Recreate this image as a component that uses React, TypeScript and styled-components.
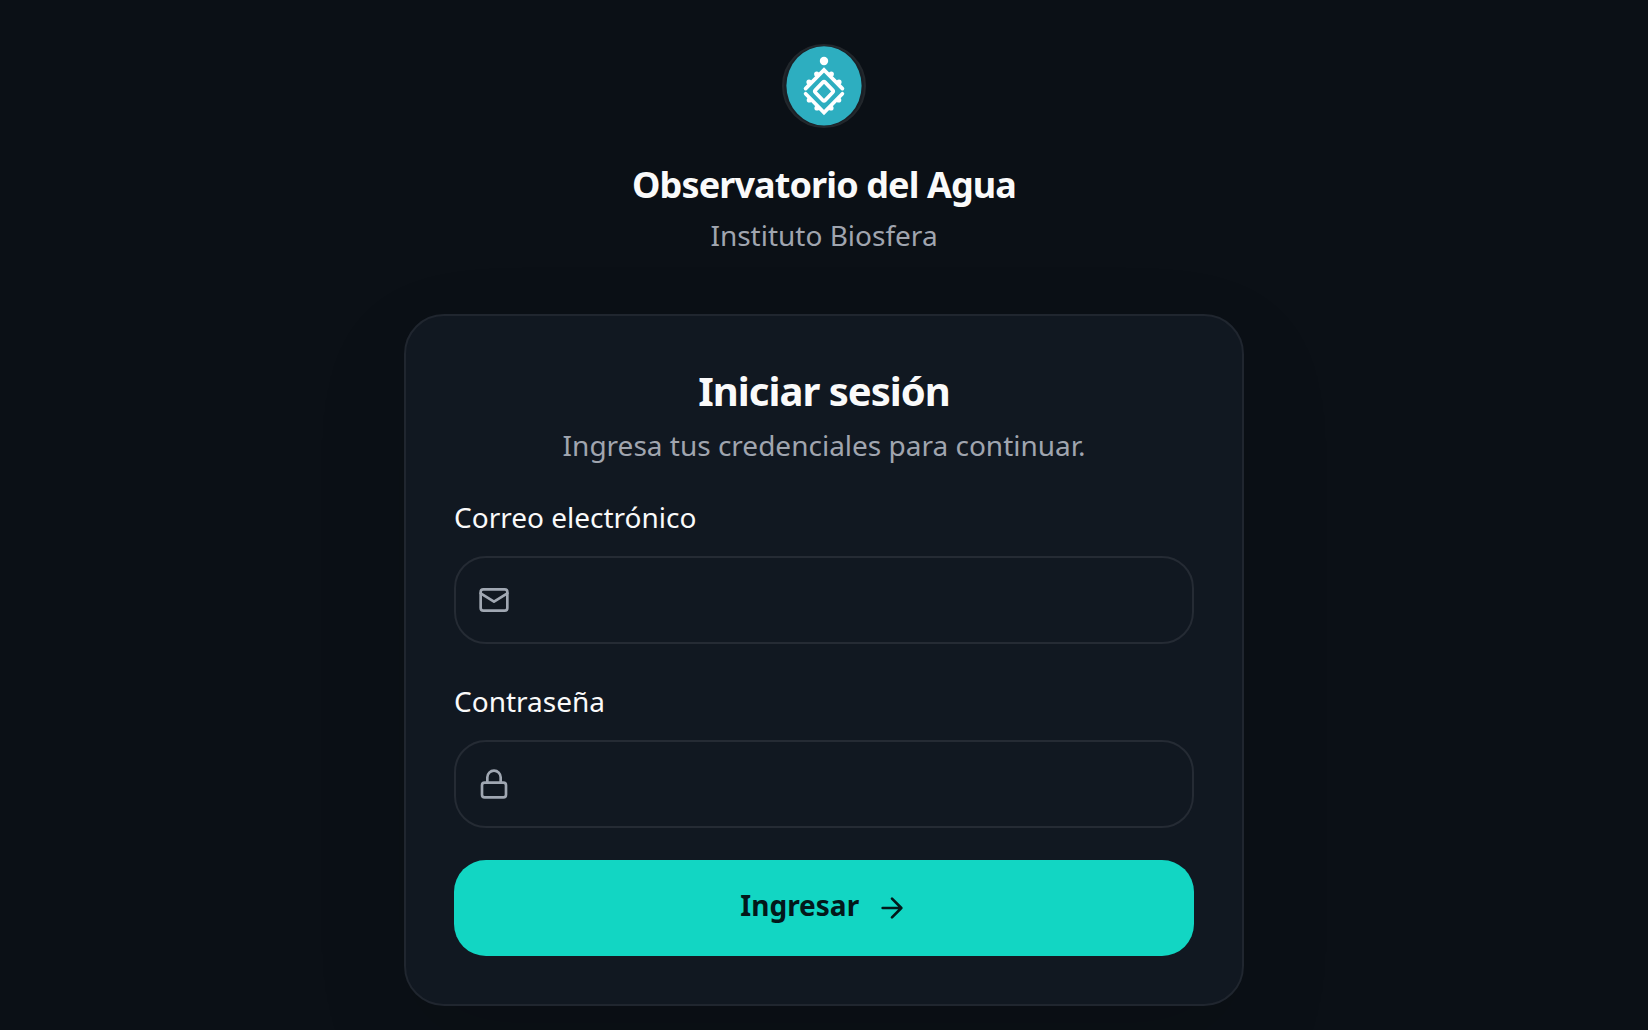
import React from "react";
import styled, { createGlobalStyle } from "styled-components";

const GlobalStyle = createGlobalStyle`
  *, *::before, *::after { box-sizing: border-box; }
  html, body { margin: 0; background: #0b1016; }
  body {
    height: 100vh;
    overflow: hidden;
    color: #fafafa;
    font-family: "Noto Sans", sans-serif;
    font-size: 28px;
    line-height: 40px;
  }
`;

const Page = styled.main`
  height: 100vh;
  display: flex;
  flex-direction: column;
  align-items: center;
  padding-top: 44px;
`;

const Brand = styled.header`
  display: flex;
  flex-direction: column;
  align-items: center;
  text-align: center;
  margin-bottom: 59px;
`;

const LogoRing = styled.div`
  width: 84px;
  height: 84px;
  border-radius: 50%;
  border: 2px solid #22272c;
  background: #1a2026;
  display: flex;
  align-items: center;
  justify-content: center;
  margin-bottom: 32px;
`;

const BrandName = styled.h1`
  margin: 0;
  font-size: 36px;
  line-height: 50px;
  font-weight: 700;
  letter-spacing: -0.025em;
`;

const Muted = styled.p`
  margin: 0;
  color: #a0a5af;
`;

const BrandOrg = styled(Muted)`
  margin-top: 5px;
`;

const Card = styled.section`
  flex: none;
  width: 840px;
  height: 692px;
  padding: 48px;
  border: 2px solid #20262f;
  border-radius: 40px;
  background: #111821;
  box-shadow: 0 36px 96px rgba(0, 0, 0, 0.1);
`;

const CardHeader = styled.div`
  text-align: center;
  margin-bottom: 32px;
`;

const CardTitle = styled.h2`
  margin: 0 0 7px;
  font-size: 40px;
  line-height: 54px;
  font-weight: 700;
  letter-spacing: -0.025em;
`;

const Form = styled.form`
  display: flex;
  flex-direction: column;
`;

const Field = styled.label`
  display: flex;
  flex-direction: column;
  gap: 19px;
  margin-bottom: 37px;
`;

const InputBox = styled.span`
  display: flex;
  align-items: center;
  gap: 20px;
  height: 88px;
  padding: 0 22px;
  border: 2px solid #252b34;
  border-radius: 32px;
  color: #a0a7b2;
`;

const Input = styled.input`
  flex: 1;
  min-width: 0;
  border: 0;
  outline: 0;
  background: transparent;
  color: #fafafa;
  font: inherit;
`;

const Submit = styled.button`
  display: flex;
  align-items: center;
  justify-content: center;
  gap: 16.5px;
  height: 96px;
  margin-top: -5px;
  padding: 0;
  border: 0;
  border-radius: 32px;
  background: #12d6c3;
  color: #03181a;
  font: inherit;
  font-weight: 700;
`;

const SubmitText = styled.span`
  padding-bottom: 6px;
`;

const Icon = styled.svg`
  flex: none;
  fill: none;
  stroke: currentColor;
  stroke-width: 2;
  stroke-linecap: round;
  stroke-linejoin: round;
`;

const bumps = [
  [23, 36], [30.7, 28], [45.3, 28], [53, 36],
  [23.3, 54], [31, 62], [45, 62], [52.7, 54],
];

const Logo = () => (
  <svg width="76" height="80" viewBox="0 0 76 80" fill="none">
    <ellipse cx="38" cy="39.8" rx="37.6" ry="39.6" fill="#2daec0" />
    <circle cx="38" cy="15" r="4.2" fill="#fff" />
    <g stroke="#fff" strokeWidth="3.7" strokeLinecap="round">
      <path d="M19.600 42.600 38 24 56.400 42.600" />
      <path d="M19.600 47.800 38 66.600 56.400 47.800" />
      <path
        d="M29.400 44.100 36.800 36.400Q38 35.200 39.200 36.400L46.600 44.100Q47.800 45.300 46.600 46.500L39.200 54.200Q38 55.400 36.800 54.200L29.400 46.500Q28.200 45.300 29.400 44.100Z"
        strokeLinejoin="round"
      />
    </g>
    <g fill="#fff">
      {bumps.map(([x, y]) => <circle key={`${x}-${y}`} cx={x} cy={y} r="2.6" />)}
    </g>
  </svg>
);

const MailIcon = () => (
  <Icon width="32" height="32" viewBox="0 0 24 24">
    <rect x="2" y="4" width="20" height="16" rx="2" />
    <path d="m2 7 10 6.300 10-6.300" />
  </Icon>
);

const LockIcon = () => (
  <Icon width="32" height="32" viewBox="0 0 24 24">
    <rect x="3" y="11" width="18" height="11" rx="2" />
    <path d="M7 11V7a5 5 0 0 1 10 0v4" />
  </Icon>
);

const ArrowIcon = () => (
  <Icon width="32" height="32" viewBox="0 0 24 24">
    <path d="M5 12h14M12 5l7 7-7 7" />
  </Icon>
);

export default function App() {
  return (
    <Page>
      <GlobalStyle />
      <Brand>
        <LogoRing><Logo /></LogoRing>
        <BrandName>Observatorio del Agua</BrandName>
        <BrandOrg>Instituto Biosfera</BrandOrg>
      </Brand>
      <Card>
        <CardHeader>
          <CardTitle>Iniciar sesión</CardTitle>
          <Muted>Ingresa tus credenciales para continuar.</Muted>
        </CardHeader>
        <Form>
          <Field>
            Correo electrónico
            <InputBox><MailIcon /><Input type="email" /></InputBox>
          </Field>
          <Field>
            Contraseña
            <InputBox><LockIcon /><Input type="password" /></InputBox>
          </Field>
          <Submit type="button"><SubmitText>Ingresar</SubmitText><ArrowIcon /></Submit>
        </Form>
      </Card>
    </Page>
  );
}
